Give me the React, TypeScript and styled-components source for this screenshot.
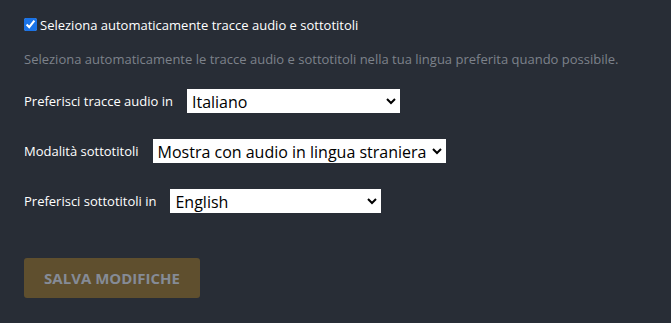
import styled, { createGlobalStyle } from "styled-components";

const GlobalStyle = createGlobalStyle`
  html, body {
    margin: 0;
    padding: 0;
    background-color: #282d36;
  }
  body {
    font-family: "Open Sans", "Noto Sans", sans-serif;
    width: 671px;
    height: 323px;
    overflow: hidden;
  }
`;

const Page = styled.section`
  padding: 16px 24px 0 24px;
  color: #eeeeee;
  font-size: 13px;
`;

const CheckRow = styled.label`
  display: flex;
  align-items: center;
  height: 17px;
  gap: 3px;
  color: #ffffff;
  font-size: 13px;

  input {
    width: 13px;
    height: 13px;
    margin: 0;
    accent-color: #1a73e8;
  }
`;

const Hint = styled.p`
  margin: 17px 0 0 0;
  color: #7d828b;
  font-size: 13px;
  line-height: 18px;
`;

const Rows = styled.div`
  display: flex;
  flex-direction: column;
  gap: 26px;
  margin-top: 21px;
`;

const Row = styled.div`
  display: flex;
  align-items: center;
  gap: 14px;
  height: 24px;
`;

const Label = styled.span`
  color: #ffffff;
  font-size: 13px;
`;

const Select = styled.select<{ $w: number }>`
  width: ${(p) => p.$w}px;
  height: 24px;
  font-family: "Open Sans", "Noto Sans", sans-serif;
  font-size: 16px;
  color: #000000;
  background-color: #ffffff;
  border: 1px solid #ffffff;
  border-radius: 0;
  padding: 0;
  outline: none;
`;

const SaveButton = styled.button`
  margin-top: 45px;
  width: 176px;
  height: 40px;
  border: 0;
  border-radius: 3px;
  background-color: #5f4f2e;
  color: #858b96;
  font-family: "Open Sans", "Noto Sans", sans-serif;
  font-weight: 700;
  font-size: 15px;
  text-transform: uppercase;
  cursor: not-allowed;
`;

function App() {
  return (
    <>
      <GlobalStyle />
      <Page>
        <CheckRow>
          <input type="checkbox" defaultChecked />
          Seleziona automaticamente tracce audio e sottotitoli
        </CheckRow>
        <Hint>
          Seleziona automaticamente le tracce audio e sottotitoli nella tua lingua preferita quando possibile.
        </Hint>
        <Rows>
          <Row>
            <Label>Preferisci tracce audio in</Label>
            <Select $w={213} defaultValue="it">
              <option value="it">Italiano</option>
              <option value="en">English</option>
            </Select>
          </Row>
          <Row>
            <Label>Modalità sottotitoli</Label>
            <Select $w={293} defaultValue="foreign">
              <option value="foreign">Mostra con audio in lingua straniera</option>
              <option value="always">Sempre attivi</option>
            </Select>
          </Row>
          <Row>
            <Label>Preferisci sottotitoli in</Label>
            <Select $w={211} defaultValue="en">
              <option value="en">English</option>
              <option value="it">Italiano</option>
            </Select>
          </Row>
        </Rows>
        <SaveButton disabled>Salva modifiche</SaveButton>
      </Page>
    </>
  );
}

export default App;
